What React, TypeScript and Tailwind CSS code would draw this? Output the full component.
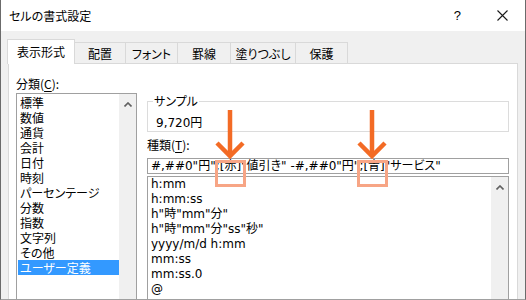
import React from 'react';

const tabs = ['表示形式', '配置', 'フォント', '罫線', '塗りつぶし', '保護'];
const tabWidths = ['w-[68px]', 'w-[52px]', 'w-[53px]', 'w-[54px]', 'w-[66px]', 'w-[53px]'];

const categories = [
  '標準',
  '数値',
  '通貨',
  '会計',
  '日付',
  '時刻',
  'パーセンテージ',
  '分数',
  '指数',
  '文字列',
  'その他',
  'ユーザー定義',
];

const formats = [
  'h:mm',
  'h:mm:ss',
  'h"時"mm"分"',
  'h"時"mm"分"ss"秒"',
  'yyyy/m/d h:mm',
  'mm:ss',
  'mm:ss.0',
  '@',
];

const ScrollUp = () => (
  <svg width="8" height="5" viewBox="0 0 8 5" className="block">
    <polyline points="0.5,4.5 4,1 7.5,4.5" fill="none" stroke="#606060" strokeWidth="1.6" />
  </svg>
);

const Scrollbar = ({ className = '' }: { className?: string }) => (
  <div className={`w-[17px] shrink-0 bg-[#f0f0f0] flex justify-center ${className}`}>
    <div className="pt-[8px]">
      <ScrollUp />
    </div>
  </div>
);

export default function App() {
  return (
    <div className="relative w-[526px] h-[300px] overflow-hidden bg-[#f0f0f0] border-x border-b border-x-[#6b6b6b] border-b-[#a0a0a0] text-black text-[12px] [font-feature-settings:'palt'] font-['DejaVu_Sans','Noto_Sans_CJK_JP',sans-serif]">
      {/* Title bar */}
      <div className="h-[31px] bg-white flex items-center pl-[8px] pr-[17px]">
        <span className="text-[12px] leading-[14px] font-['Noto_Sans_CJK_JP',sans-serif]">セルの書式設定</span>
        <div className="ml-auto flex items-center gap-[36px]">
          <span className="text-[13px] leading-[14px] font-['Liberation_Sans',sans-serif]">?</span>
          <svg width="11" height="11" viewBox="0 0 11 11" className="block">
            <path d="M0.5 0.5 L10.5 10.5 M10.5 0.5 L0.5 10.5" stroke="#1a1a1a" strokeWidth="1.1" />
          </svg>
        </div>
      </div>

      {/* Tabs */}
      <div className="flex items-end pl-[6px] pt-[8px] h-[32px] font-['Noto_Sans_CJK_JP',sans-serif]">
        {tabs.map((t, i) =>
          i === 0 ? (
            <div
              key={t}
              className={`${tabWidths[i]} h-[25px] -mb-px relative z-10 bg-white border border-b-0 border-[#d9d9d9] flex items-center justify-center leading-[14px]`}
            >
              {t}
            </div>
          ) : (
            <div
              key={t}
              className={`${tabWidths[i]} h-[21px] -ml-px bg-[#f0f0f0] border border-b-0 border-[#d9d9d9] flex items-center justify-center leading-[14px] pt-[1px]`}
            >
              {t}
            </div>
          )
        )}
      </div>

      {/* Panel */}
      <div className="ml-[7px] w-[510px] h-[260px] bg-white border border-[#d9d9d9] flex gap-[10px] pl-[7px] pt-[12px]">
        {/* Category column */}
        <div className="w-[121px] shrink-0 flex flex-col">
          <div className="h-[15px] leading-[15px] font-['Noto_Sans_CJK_JP',sans-serif]">
            分類(<span className="underline underline-offset-2">C</span>):
          </div>
          <div className="mt-[2px] h-[300px] border border-[#a0a0a0] flex">
            <div className="flex-1 pt-[1px] pl-[1px] font-['Noto_Sans_CJK_JP',sans-serif]">
              {categories.map((c) => (
                <div
                  key={c}
                  className={`h-[15px] leading-[15px] pl-[2px] whitespace-nowrap overflow-hidden ${
                    c === 'ユーザー定義' ? 'bg-[#3399ff] text-white' : ''
                  }`}
                >
                  {c}
                </div>
              ))}
            </div>
            <Scrollbar />
          </div>
        </div>

        {/* Right column */}
        <div className="w-[362px] shrink-0 flex flex-col pt-[25px]">
          <div className="relative h-[36px] border border-[#dcdcdc] pt-[14px] pl-[8px]">
            <span className="absolute -top-[8px] left-[5px] px-[1px] bg-white leading-[14px] font-['Noto_Sans_CJK_JP',sans-serif]">
              サンプル
            </span>
            <div className="leading-[14px]">9,720円</div>
          </div>

          <div className="mt-[6px] h-[14px] leading-[14px] font-['Noto_Sans_CJK_JP',sans-serif]">
            種類(<span className="underline underline-offset-2">T</span>):
          </div>

          <div className="mt-[6px] h-[21px] border border-[#a0a0a0] flex items-center pl-[3px] whitespace-nowrap leading-[14px]">
            #,##0"円";[赤]"値引き" -#,##0"円";[青]"サービス"
          </div>

          <div className="mt-[2px] h-[200px] border border-[#a0a0a0] flex">
            <div className="flex-1 pl-[3px]">
              {formats.map((f) => (
                <div key={f} className="h-[15px] leading-[15px] whitespace-nowrap overflow-hidden">
                  {f}
                </div>
              ))}
            </div>
            <Scrollbar />
          </div>
        </div>
      </div>

      {/* Annotation overlay */}
      <svg className="absolute inset-0 pointer-events-none" width="526" height="300" viewBox="0 0 526 300">
        <g fill="none" stroke="#f7a585" strokeWidth="3">
          <rect x="215.5" y="161.5" width="28" height="24" />
          <rect x="357.5" y="161.5" width="28" height="24" />
        </g>
        <g fill="none" stroke="#f36b25" strokeWidth="4.5" strokeLinejoin="miter">
          <line x1="229" y1="110" x2="229" y2="154" />
          <polyline points="216,143 229,156 242,143" />
          <line x1="371" y1="110" x2="371" y2="154" />
          <polyline points="358,143 371,156 384,143" />
        </g>
      </svg>
    </div>
  );
}
